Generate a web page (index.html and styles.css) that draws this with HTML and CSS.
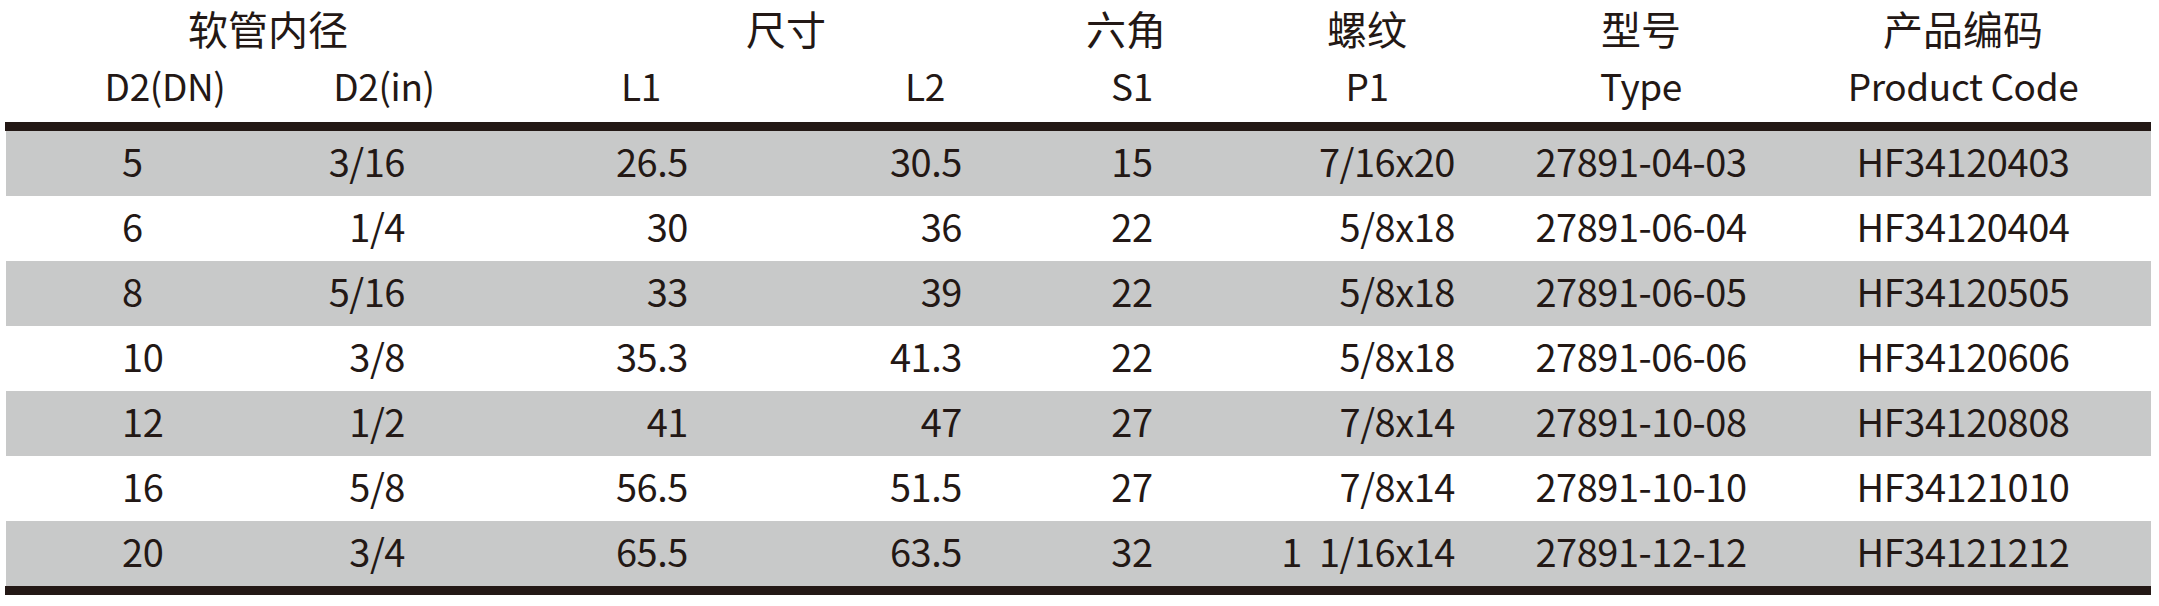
FILE: index.html
```html
<!DOCTYPE html>
<html lang="zh-CN">
<head>
<meta charset="utf-8">
<title>规格表</title>
<link rel="stylesheet" href="styles.css">
</head>
<body>
<div class="spec">
  <div class="row head-cn">
    <div class="c span12 h-hose">软管内径</div>
    <div class="c span34 h-size">尺寸</div>
    <div class="c h-hex">六角</div>
    <div class="c">螺纹</div>
    <div class="c">型号</div>
    <div class="c">产品编码</div>
  </div>
  <div class="row head-en">
    <div class="c">D2(DN)</div>
    <div class="c">D2(in)</div>
    <div class="c">L1</div>
    <div class="c">L2</div>
    <div class="c">S1</div>
    <div class="c">P1</div>
    <div class="c">Type</div>
    <div class="c">Product Code</div>
  </div>
  <div class="rule"></div>
  <div class="body">
    <div class="row data shade"><div class="c dn">5</div><div class="c inch">3/16</div><div class="c l1">26.5</div><div class="c l2">30.5</div><div class="c s1">15</div><div class="c p1">7/16x20</div><div class="c">27891-04-03</div><div class="c">HF34120403</div></div>
    <div class="row data"><div class="c dn">6</div><div class="c inch">1/4</div><div class="c l1">30</div><div class="c l2">36</div><div class="c s1">22</div><div class="c p1">5/8x18</div><div class="c">27891-06-04</div><div class="c">HF34120404</div></div>
    <div class="row data shade"><div class="c dn">8</div><div class="c inch">5/16</div><div class="c l1">33</div><div class="c l2">39</div><div class="c s1">22</div><div class="c p1">5/8x18</div><div class="c">27891-06-05</div><div class="c">HF34120505</div></div>
    <div class="row data"><div class="c dn">10</div><div class="c inch">3/8</div><div class="c l1">35.3</div><div class="c l2">41.3</div><div class="c s1">22</div><div class="c p1">5/8x18</div><div class="c">27891-06-06</div><div class="c">HF34120606</div></div>
    <div class="row data shade"><div class="c dn">12</div><div class="c inch">1/2</div><div class="c l1">41</div><div class="c l2">47</div><div class="c s1">27</div><div class="c p1">7/8x14</div><div class="c">27891-10-08</div><div class="c">HF34120808</div></div>
    <div class="row data"><div class="c dn">16</div><div class="c inch">5/8</div><div class="c l1">56.5</div><div class="c l2">51.5</div><div class="c s1">27</div><div class="c p1">7/8x14</div><div class="c">27891-10-10</div><div class="c">HF34121010</div></div>
    <div class="row data shade"><div class="c dn">20</div><div class="c inch">3/4</div><div class="c l1">65.5</div><div class="c l2">63.5</div><div class="c s1">32</div><div class="c p1"><span class="whole">1</span>1/16x14</div><div class="c">27891-12-12</div><div class="c">HF34121212</div></div>
  </div>
  <div class="rule"></div>
</div>
</body>
</html>
```
FILE: styles.css
```css
html, body {
  margin: 0;
  padding: 0;
  background: #ffffff;
}
body {
  font-family: "Noto Sans CJK SC", "Noto Sans", sans-serif;
  color: #231815;
}
.spec {
  width: 2145px;
  margin-left: 6px;
}
.row {
  display: grid;
  grid-template-columns: 318px 120px 394px 174px 240px 230px 318px 326px 25px;
}
.c {
  text-align: center;
  white-space: nowrap;
}
.head-cn {
  height: 56px;
  line-height: 56px;
  font-size: 40px;
}
.span12 { grid-column: 1 / 3; }
.span34 { grid-column: 3 / 5; }
.h-hose { padding-left: 86px; }
.h-size { padding-left: 116px; }
.h-hex { padding-right: 12px; }
.head-en {
  height: 66px;
  line-height: 59px;
  font-size: 37px;
  letter-spacing: -0.4px;
}
.rule {
  height: 9px;
  background: #231815;
  margin-left: -1px;
}
.data {
  height: 65px;
  line-height: 60px;
  font-size: 38px;
  letter-spacing: -0.45px;
}
.shade {
  background: #c8c9c9;
}
.dn { text-align: left; padding-left: 116px; }
.inch { text-align: right; padding-right: 39px; }
.l1 { text-align: right; padding-right: 150px; }
.l2 { text-align: right; padding-right: 50px; }
.s1 { text-align: center; }
.p1 { text-align: right; padding-right: 27px; }
.whole { margin-right: 17px; }
```
